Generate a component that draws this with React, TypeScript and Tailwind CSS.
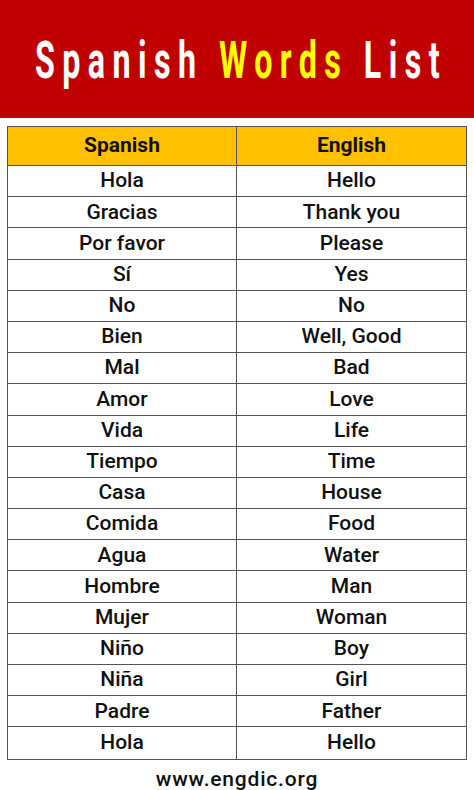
import React from "react";

const rows: [string, string][] = [
  ["Hola", "Hello"],
  ["Gracias", "Thank you"],
  ["Por favor", "Please"],
  ["Sí", "Yes"],
  ["No", "No"],
  ["Bien", "Well, Good"],
  ["Mal", "Bad"],
  ["Amor", "Love"],
  ["Vida", "Life"],
  ["Tiempo", "Time"],
  ["Casa", "House"],
  ["Comida", "Food"],
  ["Agua", "Water"],
  ["Hombre", "Man"],
  ["Mujer", "Woman"],
  ["Niño", "Boy"],
  ["Niña", "Girl"],
  ["Padre", "Father"],
  ["Hola", "Hello"],
];

export default function App() {
  return (
    <div className="w-[474px] h-[790px] bg-white overflow-hidden" style={{ fontFamily: "Roboto, 'Noto Sans', sans-serif" }}>
      <div className="h-[118px] bg-[#c00000] flex items-center justify-center overflow-hidden">
        <div className="[transform:scaleX(0.62)] whitespace-nowrap text-[52px] font-bold tracking-[12px] leading-none text-white pl-[12px] mt-[4px]">
          Spanish <span className="text-[#ffff00]">Words</span> List
        </div>
      </div>
      <div className="mt-[8px] ml-[7px] w-[460px] border border-[#555] text-[#111]">
        <div className="flex h-[39px] bg-[#ffc000] border-b border-[#555] text-[21px] font-bold">
          <div className="w-[229px] border-r border-[#555] flex items-center justify-center">Spanish</div>
          <div className="flex-1 flex items-center justify-center">English</div>
        </div>
        {rows.map(([es, en], i) => (
          <div key={i} className={`flex h-[31.2px] text-[21px] font-medium ${i < rows.length - 1 ? "border-b border-[#555]" : ""}`}>
            <div className="w-[229px] border-r border-[#555] flex items-center justify-center">{es}</div>
            <div className="flex-1 flex items-center justify-center">{en}</div>
          </div>
        ))}
      </div>
      <div className="mt-[4px] text-center text-[21px] font-medium tracking-[0.8px] text-[#111]">www.engdic.org</div>
    </div>
  );
}
